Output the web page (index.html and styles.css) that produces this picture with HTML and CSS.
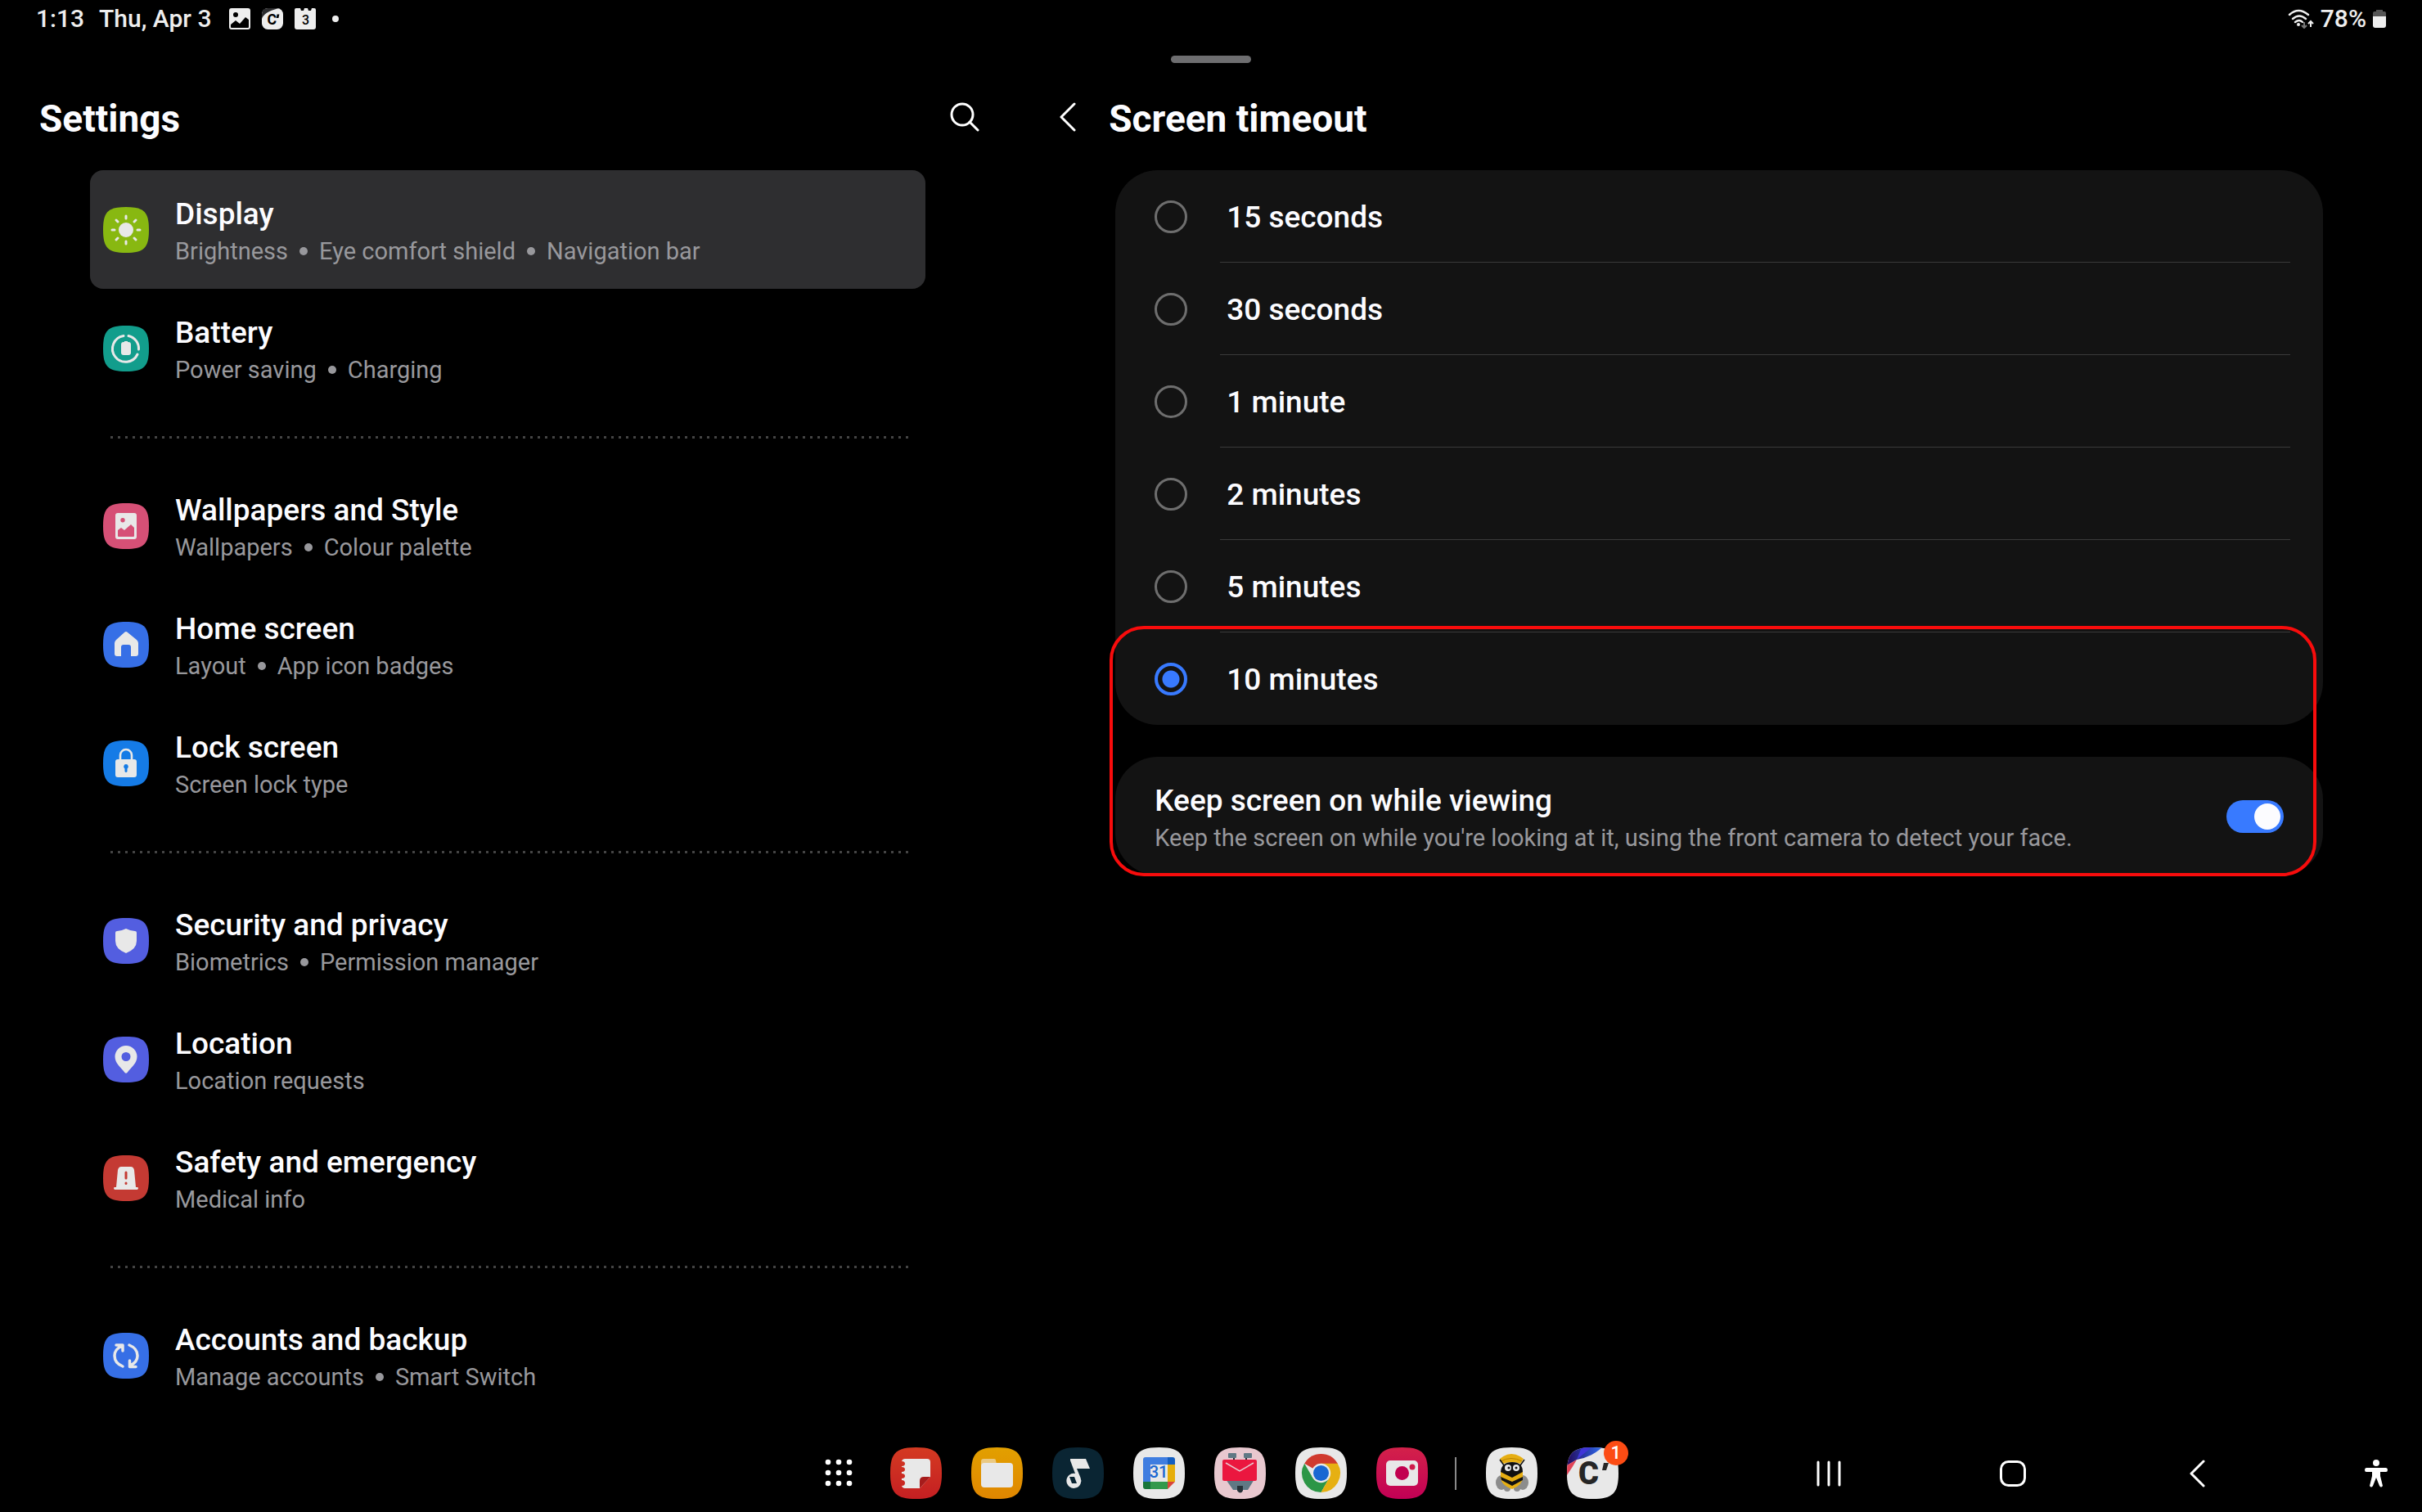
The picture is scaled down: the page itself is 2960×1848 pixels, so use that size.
FILE: index.html
```html
<!DOCTYPE html>
<html lang="en">
<head>
  <meta charset="UTF-8" />
  <meta name="viewport" content="width=device-width, initial-scale=1.0"/>
  <title>Settings - Screen timeout</title>
  <link rel="stylesheet" href="styles.css">
</head>
<body>

  <header class="status-bar">
    <div class="status-left">
      <span class="clock">1:13</span>
      <span class="date">Thu, Apr 3</span>
      <svg class="status-icon" viewBox="0 0 26 26" aria-hidden="true">
        <path fill="#eee" fill-rule="evenodd" d="M3 0h20a3 3 0 0 1 3 3v20a3 3 0 0 1-3 3H3a3 3 0 0 1-3-3V3a3 3 0 0 1 3-3zM8 5a3 3 0 1 0 0 6 3 3 0 0 0 0-6zM2 20v3q0 1 1 1h20q1 0 1-1v-9l-4-3-7 8-5-4z"/>
      </svg>
      <svg class="status-icon" viewBox="0 0 28 28" aria-hidden="true">
        <rect width="28" height="28" rx="8" fill="#eee"/>
        <path d="M0 14C2 8 8 4 22 0H8Q0 0 0 8z" fill="#2c2c2e"/>
        <text x="7" y="21" class="c-small">C</text>
        <path d="M20 8h3l-1 5h-3z" fill="#000"/>
      </svg>
      <svg class="status-icon" viewBox="0 0 26 26" aria-hidden="true">
        <path fill="#eee" d="M2 0h5l1 3h3l1-3h4l1 3h3l1-3h3q2 0 2 2v21q0 3-3 3H3q-3 0-3-3V2q0-2 2-2z"/>
        <text x="9" y="20" class="day-small">3</text>
      </svg>
      <span class="more-dot"></span>
    </div>
    <div class="status-right">
      <svg class="wifi" viewBox="0 0 32 24" aria-hidden="true">
        <g fill="none" stroke="#eee" stroke-width="2.4" stroke-linecap="round">
          <path d="M2 7q11-10 23 0M6 12q8-7 16 0M9 16q5-4 9 0"/>
        </g>
        <circle cx="13" cy="19" r="2" fill="#eee"/>
        <path d="M20 16v7M17 20l3 3 3-3" fill="none" stroke="#777" stroke-width="2"/>
        <path d="M28 22v-7M25 18l3-3 3 3" fill="none" stroke="#eee" stroke-width="2"/>
      </svg>
      <span>78%</span>
      <svg class="battery" viewBox="0 0 16 22" aria-hidden="true">
        <path d="M4 0h8v2h2q2 0 2 2v5H0V4q0-2 2-2h2z" fill="#555"/>
        <path d="M0 8h16v11q0 3-3 3H3q-3 0-3-3z" fill="#eee"/>
      </svg>
    </div>
  </header>

  <div class="handle"></div>

  <main>
    <section class="menu">
      <div class="pane-header">
        <h1>Settings</h1>
        <button class="icon-button" aria-label="Search">
          <svg viewBox="0 0 36 36" width="36" height="36">
            <g fill="none" stroke="#fff" stroke-width="3" stroke-linecap="round"><circle cx="15" cy="15" r="13"/><path d="M24 24l10 10"/></g>
          </svg>
        </button>
      </div>

      <nav class="menu-list">
        <div class="group">
          <a href="#" class="item active">
            <svg class="item-icon" viewBox="0 0 56 56">
              <path fill="#88b811" d="M0 28C0 6 6 0 28 0s28 6 28 28-6 28-28 28S0 50 0 28z"/>
              <circle cx="28" cy="28" r="9" fill="#e8e8e8"/>
              <path stroke="#e8e8e8" stroke-width="3" stroke-linecap="round" d="M28 11v3M28 42v3M11 28h3M42 28h3M16 16l2 2M38 38l2 2M16 40l2-2M38 18l2-2"/>
            </svg>
            <div class="item-text">
              <h2>Display</h2>
              <p>Brightness<i></i>Eye comfort shield<i></i>Navigation bar</p>
            </div>
          </a>
          <a href="#" class="item">
            <svg class="item-icon" viewBox="0 0 56 56">
              <path fill="#129d8c" d="M0 28C0 6 6 0 28 0s28 6 28 28-6 28-28 28S0 50 0 28z"/>
              <path fill="none" stroke="#e8e8e8" stroke-width="3" stroke-linecap="round" d="M25 12.500A16 16 0 1 0 42 35M31 12.500A16 16 0 0 1 43.500 29"/>
              <path fill="#e8e8e8" d="M26 19h4v1h1q3 0 3 3v10q0 3-3 3h-6q-3 0-3-3V23q0-3 3-3h1z"/>
            </svg>
            <div class="item-text">
              <h2>Battery</h2>
              <p>Power saving<i></i>Charging</p>
            </div>
          </a>
        </div>

        <div class="group">
          <a href="#" class="item">
            <svg class="item-icon" viewBox="0 0 56 56">
              <path fill="#d65076" d="M0 28C0 6 6 0 28 0s28 6 28 28-6 28-28 28S0 50 0 28z"/>
              <path fill="#e8e8e8" fill-rule="evenodd" d="M18 12h20q3 0 3 3v26q0 3-3 3H18q-3 0-3-3V15q0-3 3-3zM24 18a2.700 2.700 0 1 0 0 5.400 2.700 2.700 0 0 0 0-5.400zM18 33v7q0 1 1 1h18q1 0 1-1V30l-4-4-8 7-4-3z"/>
            </svg>
            <div class="item-text">
              <h2>Wallpapers and Style</h2>
              <p>Wallpapers<i></i>Colour palette</p>
            </div>
          </a>
          <a href="#" class="item">
            <svg class="item-icon" viewBox="0 0 56 56">
              <path fill="#366fe6" d="M0 28C0 6 6 0 28 0s28 6 28 28-6 28-28 28S0 50 0 28z"/>
              <path fill="#e8e8e8" d="M26 13q2-2 4 0l11 9q2 2 2 4v13q0 3-3 3h-6V31q0-3-3-3h-6q-3 0-3 3v11h-5q-3 0-3-3V26q0-2 2-4z"/>
            </svg>
            <div class="item-text">
              <h2>Home screen</h2>
              <p>Layout<i></i>App icon badges</p>
            </div>
          </a>
          <a href="#" class="item">
            <svg class="item-icon" viewBox="0 0 56 56">
              <path fill="#157be6" d="M0 28C0 6 6 0 28 0s28 6 28 28-6 28-28 28S0 50 0 28z"/>
              <path fill="none" stroke="#e8e8e8" stroke-width="2.600" d="M21 25v-7a7 7 0 0 1 14 0v7"/>
              <path fill="#e8e8e8" fill-rule="evenodd" d="M18 23h20q3 0 3 3v16q0 3-3 3H18q-3 0-3-3V26q0-3 3-3zM28 29a3 3 0 0 0-1.500 5.500V38q1.500 2 3 0v-3.500A3 3 0 0 0 28 29z"/>
            </svg>
            <div class="item-text">
              <h2>Lock screen</h2>
              <p>Screen lock type</p>
            </div>
          </a>
        </div>

        <div class="group">
          <a href="#" class="item">
            <svg class="item-icon" viewBox="0 0 56 56">
              <path fill="#535ee0" d="M0 28C0 6 6 0 28 0s28 6 28 28-6 28-28 28S0 50 0 28z"/>
              <path fill="#e8e8e8" d="M28 13q6 3 11 3 2 0 2 2v10q0 10-13 15-13-5-13-15V18q0-2 2-2 5 0 11-3z"/>
            </svg>
            <div class="item-text">
              <h2>Security and privacy</h2>
              <p>Biometrics<i></i>Permission manager</p>
            </div>
          </a>
          <a href="#" class="item">
            <svg class="item-icon" viewBox="0 0 56 56">
              <path fill="#535ee0" d="M0 28C0 6 6 0 28 0s28 6 28 28-6 28-28 28S0 50 0 28z"/>
              <path fill="#e8e8e8" fill-rule="evenodd" d="M28 11a13.500 13.500 0 0 0-13.500 13.500c0 8 7 13 12 19.500q1.500 1.500 3 0c5-6.500 12-11.500 12-19.500A13.500 13.500 0 0 0 28 11zm0 8a5.500 5.500 0 1 1 0 11 5.500 5.500 0 0 1 0-11z"/>
            </svg>
            <div class="item-text">
              <h2>Location</h2>
              <p>Location requests</p>
            </div>
          </a>
          <a href="#" class="item">
            <svg class="item-icon" viewBox="0 0 56 56">
              <path fill="#c43a33" d="M0 28C0 6 6 0 28 0s28 6 28 28-6 28-28 28S0 50 0 28z"/>
              <path fill="#e8e8e8" d="M22 14h12q3 0 4 4l2 21h2q2 1 0 3H14q-2-2 0-3h2l2-21q1-4 4-4z"/>
              <path stroke="#c43a33" stroke-width="3" stroke-linecap="round" d="M28 21v7M28 34v.500"/>
            </svg>
            <div class="item-text">
              <h2>Safety and emergency</h2>
              <p>Medical info</p>
            </div>
          </a>
        </div>

        <div class="group">
          <a href="#" class="item">
            <svg class="item-icon" viewBox="0 0 56 56">
              <path fill="#366fe6" d="M0 28C0 6 6 0 28 0s28 6 28 28-6 28-28 28S0 50 0 28z"/>
              <g fill="none" stroke="#e8e8e8" stroke-width="3.500" stroke-linecap="round" stroke-linejoin="round">
                <path d="M24 41Q14 37 14 28q0-8 9-12M16 15h8v7M32 15q10 4 10 13 0 8-9 12M40 41.500h-7.500V34"/>
              </g>
            </svg>
            <div class="item-text">
              <h2>Accounts and backup</h2>
              <p>Manage accounts<i></i>Smart Switch</p>
            </div>
          </a>
        </div>
      </nav>
    </section>

    <section class="detail">
      <div class="pane-header">
        <button class="icon-button" aria-label="Back">
          <svg viewBox="0 0 20 36" width="20" height="36">
            <path d="M18 2L2 18l16 16" fill="none" stroke="#fff" stroke-width="3" stroke-linecap="round" stroke-linejoin="round"/>
          </svg>
        </button>
        <h1>Screen timeout</h1>
      </div>

      <div class="detail-body">
        <form class="card options">
          <label class="option"><input type="radio" name="timeout"><span>15 seconds</span></label>
          <label class="option"><input type="radio" name="timeout"><span>30 seconds</span></label>
          <label class="option"><input type="radio" name="timeout"><span>1 minute</span></label>
          <label class="option"><input type="radio" name="timeout"><span>2 minutes</span></label>
          <label class="option"><input type="radio" name="timeout"><span>5 minutes</span></label>
          <label class="option"><input type="radio" name="timeout" checked><span>10 minutes</span></label>
        </form>

        <label class="card keep-on">
          <span class="item-text">
            <strong>Keep screen on while viewing</strong>
            <small>Keep the screen on while you're looking at it, using the front camera to detect your face.</small>
          </span>
          <input type="checkbox" class="switch" role="switch" checked>
        </label>

        <div class="highlight"></div>
      </div>
    </section>
  </main>

  <footer class="taskbar">
    <button class="app all-apps" aria-label="All apps">
      <svg viewBox="0 0 63 63">
        <g fill="#fff">
          <circle cx="18" cy="18" r="3.300"/><circle cx="31" cy="18" r="3.300"/><circle cx="44" cy="18" r="3.300"/>
          <circle cx="18" cy="31" r="3.300"/><circle cx="31" cy="31" r="3.300"/><circle cx="44" cy="31" r="3.300"/>
          <circle cx="18" cy="44" r="3.300"/><circle cx="31" cy="44" r="3.300"/><circle cx="44" cy="44" r="3.300"/>
        </g>
      </svg>
    </button>
    <div class="apps">
      <button class="app" aria-label="Notes">
        <svg viewBox="0 0 63 63">
          <defs><linearGradient id="notes" x2="0" y2="1"><stop stop-color="#d43a22"/><stop offset="1" stop-color="#c41f22"/></linearGradient></defs>
          <path fill="url(#notes)" d="M0 31.500C0 7 7 0 31.500 0S63 7 63 31.500 56 63 31.500 63 0 56 0 31.500z"/>
          <path fill="#e8e8e8" d="M18 14h27q4 0 4 4v18L36 50H18q-3 0-4-3 4 0 4-3.500T14 40v-2q4 0 4-3t-4-3v-2q4 0 4-3t-4-3v-1q4 0 4-3t-4-3q1-3 4-3z"/>
          <path fill="#a61b1b" d="M36 50V41q0-5 5-5h8z"/>
        </svg>
      </button>
      <button class="app" aria-label="My Files">
        <svg viewBox="0 0 63 63">
          <defs><linearGradient id="files" x2="0" y2="1"><stop stop-color="#e2a000"/><stop offset="1" stop-color="#e08600"/></linearGradient></defs>
          <path fill="url(#files)" d="M0 31.500C0 7 7 0 31.500 0S63 7 63 31.500 56 63 31.500 63 0 56 0 31.500z"/>
          <path fill="#eac983" d="M15 14h13q2 0 2 2l1 5v5H12V17q0-3 3-3z"/>
          <rect x="12" y="19" width="39" height="30" rx="4" fill="#e8e8e8"/>
        </svg>
      </button>
      <button class="app" aria-label="Music">
        <svg viewBox="0 0 63 63">
          <path fill="#0a2533" d="M0 31.500C0 7 7 0 31.500 0S63 7 63 31.500 56 63 31.500 63 0 56 0 31.500z"/>
          <path fill="#e8e8e8" fill-rule="evenodd" d="M22 14h19l5 12H30l4.500 11A9 9 0 1 1 28 32l-6-16zM21 36l3 8h6l-3-8z"/>
        </svg>
      </button>
      <button class="app" aria-label="Calendar">
        <svg viewBox="0 0 63 63">
          <path fill="#e8e8e8" d="M0 31.500C0 7 7 0 31.500 0S63 7 63 31.500 56 63 31.500 63 0 56 0 31.500z"/>
          <path fill="#3f7de0" d="M15 12h27v9H21v21h-9V15q0-3 3-3z"/>
          <path fill="#145ec0" d="M42 12h6q3 0 3 3v6h-9z"/>
          <path fill="#e6ae0a" d="M42 21h9v21h-9z"/>
          <path fill="#33994c" d="M21 42h21v9H21z"/>
          <path fill="#18763a" d="M12 42h9v9h-6q-3 0-3-3z"/>
          <path fill="#d9453a" d="M42 42h9l-9 9z"/>
          <text x="31" y="37" class="cal-day">31</text>
        </svg>
      </button>
      <button class="app" aria-label="Mail">
        <svg viewBox="0 0 63 63">
          <path fill="#e8c8cf" d="M0 31.500C0 7 7 0 31.500 0S63 7 63 31.500 56 63 31.500 63 0 56 0 31.500z"/>
          <path fill="#263238" d="M23 12h2v4h-2zM38 12h2v4h-2z"/>
          <rect x="17" y="7" width="10" height="6" rx="1" fill="#607884"/><rect x="36" y="7" width="10" height="6" rx="1" fill="#607884"/>
          <path fill="#607884" d="M14 39h35l-8 13H23z"/>
          <rect x="10" y="15" width="42" height="26" rx="2" fill="#eb173f"/>
          <path d="M14 19l17 10 17-10" fill="none" stroke="#e8c8cf" stroke-width="1.500"/>
          <path fill="#263238" d="M28 47h7v6q-3 5-7 0z"/>
        </svg>
      </button>
      <button class="app" aria-label="Chrome">
        <svg viewBox="0 0 63 63">
          <path fill="#e8e8e8" d="M0 31.500C0 7 7 0 31.500 0S63 7 63 31.500 56 63 31.500 63 0 56 0 31.500z"/>
          <path fill="#d03a2e" d="M31.500 31.500L11.200 19.800A23.400 23.400 0 0 1 51.800 19.800z"/>
          <path fill="#2c9646" d="M11.200 19.800A23.400 23.400 0 0 0 31.500 54.900L41.600 37.300 31.500 31.500 21.400 37.300z"/>
          <path fill="#e6b012" d="M31.500 54.900A23.400 23.400 0 0 0 51.800 19.800H31.500L41.600 37.300z"/>
          <circle cx="31.500" cy="31.500" r="11.700" fill="#e8e8e8"/>
          <circle cx="31.500" cy="31.500" r="9.500" fill="#1967d2"/>
        </svg>
      </button>
      <button class="app" aria-label="Camera">
        <svg viewBox="0 0 63 63">
          <defs><linearGradient id="cam" x2="0" y2="1"><stop stop-color="#d3214a"/><stop offset="1" stop-color="#c20055"/></linearGradient></defs>
          <path fill="url(#cam)" d="M0 31.500C0 7 7 0 31.500 0S63 7 63 31.500 56 63 31.500 63 0 56 0 31.500z"/>
          <rect x="12" y="16" width="39" height="31" rx="5" fill="#e8e8e8"/>
          <circle cx="31.500" cy="31.500" r="8.500" fill="#c2004f"/>
          <circle cx="44" cy="24" r="3.500" fill="#cf1c4b"/>
        </svg>
      </button>
    </div>
    <span class="separator"></span>
    <div class="apps">
      <button class="app" aria-label="Bee">
        <svg viewBox="0 0 63 63">
          <path fill="#e8e8e8" d="M0 31.500C0 7 7 0 31.500 0S63 7 63 31.500 56 63 31.500 63 0 56 0 31.500z"/>
          <path fill="#e6ae12" d="M17 14q14-12 29 0l-4 6q-10-4-21 0z"/>
          <path d="M18 17q13-7 26 0" fill="none" stroke="#b98200" stroke-width="1"/>
          <g fill="#8c8c8c"><ellipse cx="19" cy="43" rx="7" ry="9"/><ellipse cx="45" cy="43" rx="7" ry="9"/><circle cx="26" cy="50" r="4"/><circle cx="38" cy="50" r="4"/></g>
          <path fill="#e6ae12" d="M18 30h27v6q0 10-13 15-14-5-14-15z"/>
          <path fill="#111" d="M18 30q1-12 14-12t13 12l-13 7zM18 36l14 6 13-6v4l-13 7-13-7z"/>
          <path d="M22 22l-5-7M42 22l5-7" stroke="#111" stroke-width="1.500"/>
          <circle cx="27" cy="25" r="4" fill="#e8e8e8"/><circle cx="37" cy="25" r="4" fill="#e8e8e8"/>
          <circle cx="28" cy="25" r="1.500" fill="#111"/><circle cx="37" cy="25" r="1.500" fill="#111"/>
        </svg>
      </button>
      <button class="app" aria-label="C, 1 notification">
        <svg viewBox="0 0 63 63">
          <defs>
            <clipPath id="squircle"><path d="M0 31.500C0 7 7 0 31.500 0S63 7 63 31.500 56 63 31.500 63 0 56 0 31.500z"/></clipPath>
            <linearGradient id="sweep"><stop stop-color="#230a5c"/><stop offset="1" stop-color="#2f6bf0"/></linearGradient>
          </defs>
          <g clip-path="url(#squircle)">
            <rect width="63" height="63" fill="#e8e8e8"/>
            <path fill="url(#sweep)" d="M0 0h43Q30 12 12 15L0 22z"/>
            <path fill="#3f35d8" d="M18 0h12L12 15z"/>
            <path fill="#e04458" d="M0 22l12-7Q7 24 0 34z"/>
          </g>
          <text x="14" y="45" class="c-logo">C</text>
          <path fill="#262626" d="M45 19h6l-3 9h-5z"/>
        </svg>
        <span class="badge">1</span>
      </button>
    </div>

    <div class="nav-keys">
      <button class="key" aria-label="Recents">
        <svg viewBox="0 0 34 34"><path d="M4 3v28M17 3v28M30 3v28" stroke="#fff" stroke-width="3" stroke-linecap="round"/></svg>
      </button>
      <button class="key" aria-label="Home">
        <svg viewBox="0 0 34 34"><rect x="2.500" y="2.500" width="29" height="29" rx="9" fill="none" stroke="#fff" stroke-width="3"/></svg>
      </button>
      <button class="key" aria-label="Back">
        <svg viewBox="0 0 34 34"><path d="M25 2L10 17l15 15" fill="none" stroke="#fff" stroke-width="3" stroke-linecap="round" stroke-linejoin="round"/></svg>
      </button>
    </div>
    <button class="key" aria-label="Accessibility">
      <svg viewBox="0 0 34 34">
        <circle cx="17" cy="4" r="4" fill="#fff"/>
        <path fill="#fff" d="M5 10h24q2 0 2 2.500T29 15h-7v5l3 12q-2 3-4 0l-4-10-4 10q-2 3-4 0l3-12v-5H5q-2 0-2-2.500T5 10z"/>
      </svg>
    </button>
  </footer>

</body>
</html>
```

FILE: styles.css
```css
* {
  box-sizing: border-box;
  margin: 0;
  padding: 0;
  font-family: Roboto, 'Noto Sans', sans-serif;
}

body {
  background: #000;
  color: #fcfcff;
  min-height: 100vh;
  display: flex;
  flex-direction: column;
}

button {
  background: none;
  border: none;
  cursor: pointer;
}

svg {
  display: block;
}

/* status bar */
.status-bar {
  display: flex;
  justify-content: space-between;
  align-items: center;
  height: 46px;
  padding: 0 44px;
  font-size: 30px;
  line-height: 44px;
  font-weight: 500;
  color: #eee;
}

.status-left,
.status-right {
  display: flex;
  align-items: center;
}

.date {
  margin: 0 22px 0 18px;
}

.status-icon {
  width: 26px;
  height: 26px;
  margin-right: 14px;
}

.more-dot {
  width: 8px;
  height: 8px;
  margin-left: 6px;
  border-radius: 50%;
  background: #eee;
}

.c-small {
  font-size: 19px;
  font-weight: 700;
}

.day-small {
  font-size: 16px;
  font-weight: 500;
}

.wifi {
  width: 32px;
  height: 24px;
  margin-right: 8px;
}

.battery {
  width: 16px;
  height: 22px;
  margin-left: 8px;
}

.handle {
  width: 98px;
  height: 9px;
  margin: 22px auto 0;
  border-radius: 5px;
  background: #6e6e70;
}

/* two panes */
main {
  flex: 1;
  display: grid;
  grid-template-columns: 42% 1fr;
}

.pane-header {
  display: flex;
  align-items: center;
  height: 131px;
}

.pane-header h1 {
  padding-top: 4px;
  font-size: 46px;
  line-height: 56px;
  font-weight: 700;
}

.menu .pane-header {
  justify-content: space-between;
  padding: 0 46px 0 48px;
}

.detail .pane-header {
  gap: 40px;
  padding-left: 52px;
}

/* left list */
.menu-list {
  padding: 0 112px 0 110px;
}

.group + .group::before {
  content: "";
  display: block;
  height: 3px;
  margin: 35px 18px 34px 25px;
  background: repeating-linear-gradient(90deg, #444 0 3px, transparent 3px 9px);
}

.item {
  display: flex;
  align-items: center;
  gap: 32px;
  height: 145px;
  padding: 0 16px;
  border-radius: 16px;
  color: inherit;
  text-decoration: none;
}

.item.active {
  background: #2e2e30;
}

.item-icon {
  width: 56px;
  height: 56px;
}

.item-text {
  padding-top: 5px;
}

.item-text h2,
.item-text strong {
  display: block;
  font-size: 37px;
  line-height: 48px;
  font-weight: 500;
}

.item-text p,
.item-text small {
  display: block;
  font-size: 29px;
  line-height: 42px;
  color: #98989c;
}

.item-text i {
  display: inline-block;
  width: 10px;
  height: 10px;
  margin: 0 14px;
  border-radius: 50%;
  background: #98989c;
  vertical-align: 5px;
}

/* right pane */
.detail-body {
  position: relative;
  margin: 0 121px 0 120px;
}

.card {
  background: #131313;
  border-radius: 52px;
}

.option {
  display: flex;
  align-items: center;
  gap: 40px;
  height: 113px;
  padding: 0 40px 0 48px;
  font-size: 37px;
  font-weight: 500;
}

.option span {
  flex: 1;
  line-height: 108px;
  padding: 4px 0 0 8px;
  border-bottom: 1px solid #3a3a3a;
}

.option:last-child span {
  border-color: transparent;
}

.option input {
  appearance: none;
  width: 40px;
  height: 40px;
  border: 3px solid #6e6e6e;
  border-radius: 50%;
}

.option input:checked {
  border: 4px solid #387aff;
  background: radial-gradient(circle, #387aff 10px, transparent 11px);
}

.keep-on {
  display: flex;
  justify-content: space-between;
  align-items: center;
  height: 145px;
  margin-top: 39px;
  padding: 0 48px;
}

.switch {
  appearance: none;
  width: 70px;
  height: 40px;
  border-radius: 20px;
  background: #387aff;
}

.switch::before {
  content: "";
  display: block;
  width: 32px;
  height: 32px;
  margin: 4px 4px 4px auto;
  border-radius: 50%;
  background: #fcfcff;
}

/* red frame around the chosen option and the switch */
.highlight {
  position: absolute;
  left: -7px;
  right: 8px;
  bottom: -1px;
  height: 306px;
  border: 4px solid #f80c0c;
  border-radius: 42px;
  pointer-events: none;
}

/* taskbar */
.taskbar {
  display: flex;
  align-items: center;
  height: 95px;
  padding: 0 39px 0 33%;
}

.apps {
  display: flex;
  gap: 36px;
}

.app {
  position: relative;
  width: 63px;
  height: 63px;
}

.all-apps {
  margin: 0 31px 0 17px;
}

.separator {
  width: 2px;
  height: 40px;
  margin: 0 36px 0 33px;
  background: #8a8a8a;
}

.cal-day {
  font-size: 20px;
  font-weight: 500;
  text-anchor: middle;
  fill: #1967d2;
}

.c-logo {
  font-size: 38px;
  font-weight: 900;
  fill: #262626;
}

.badge {
  position: absolute;
  top: -8px;
  right: -12px;
  width: 30px;
  height: 30px;
  border-radius: 50%;
  background: #fc4c14;
  color: #fff;
  font-size: 22px;
  line-height: 30px;
  font-weight: 500;
}

.nav-keys {
  display: flex;
  gap: 191px;
  margin: 0 185px 0 auto;
}

.key {
  width: 34px;
  height: 34px;
}
```
